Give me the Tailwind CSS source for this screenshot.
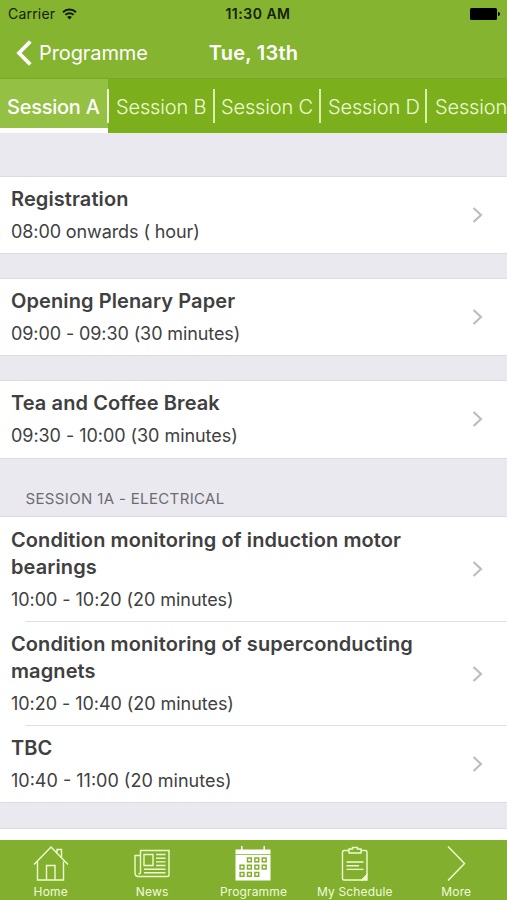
<!DOCTYPE html>
<html lang="en">
<head>
    <meta charset="UTF-8">
    <meta name="viewport" content="width=device-width, initial-scale=1.0">
    <title>Programme - Tue, 13th</title>
    <script src="https://cdn.jsdelivr.net/npm/@tailwindcss/browser@4"></script>
</head>
<body class="h-[900px] overflow-hidden bg-[#eae9f0] font-['Inter','Liberation_Sans',sans-serif] text-[#404040]">
<div class="flex h-[900px] w-[507px] flex-col overflow-hidden">
    <header class="h-[79px] shrink-0 border-b border-[#7aa82b] bg-[#85b430]">
        <!-- Status bar -->
        <div class="grid h-[27px] grid-cols-3 items-center pl-2 pr-[7px] text-[14px] text-[#152000]">
            <div class="flex items-center gap-[7px]">
                <span class="tracking-[0.2px]">Carrier</span>
                <svg width="15" height="12" viewBox="0 0 15 12" fill="none" stroke="#101800" stroke-width="2">
                    <path d="M1 4.2a9.3 9.3 0 0 1 13 0M3.4 6.9a5.9 5.9 0 0 1 8.2 0"/>
                    <path d="M7.5 11.6L5.1 9.1a3.5 3.5 0 0 1 4.8 0z" fill="#101800" stroke="none"/>
                </svg>
            </div>
            <span class="-mr-2 text-center font-semibold tracking-[0.5px]">11:30 AM</span>
            <svg class="justify-self-end" width="30" height="12" viewBox="0 0 30 12">
                <rect width="27" height="12" rx="1.5"/>
                <path d="M28 4a2 2 0 0 1 0 4z"/>
            </svg>
        </div>
        <!-- Navigation bar -->
        <div class="grid h-[51px] grid-cols-3 items-center text-white">
            <a href="#" class="flex items-center gap-[7px] pl-4">
                <svg width="16" height="26" viewBox="0 0 16 26" fill="none" stroke="white" stroke-width="3.8">
                    <path d="M14.3 1.5L3 13l11.3 11.5"/>
                </svg>
                <span class="text-[20px] tracking-[-0.1px]">Programme</span>
            </a>
            <h1 class="text-center text-[20px] font-semibold tracking-[0.25px]">Tue, 13th</h1>
        </div>
    </header>

    <nav class="flex h-[54px] shrink-0 overflow-hidden bg-[#7bb01c] text-[20px] font-light tracking-[-0.15px] text-[#eefbd5]">
        <a href="#" class="relative flex w-[107.5px] shrink-0 items-center border-b-[5px] border-white bg-[#94c043] pl-[7px] pt-[6px] font-medium tracking-[-0.25px] whitespace-nowrap text-white">Session A<span class="absolute -right-px top-[10px] h-[34px] w-[2px] bg-[#eff7dd]"></span></a>
        <a href="#" class="relative flex w-[106px] shrink-0 items-center pl-[8.5px] pt-px whitespace-nowrap">Session B<span class="absolute -right-px top-[10px] h-[34px] w-[2px] bg-[#d9f0ac]"></span></a>
        <a href="#" class="relative flex w-[106.5px] shrink-0 items-center pl-[7.5px] pt-px whitespace-nowrap">Session C<span class="absolute -right-px top-[10px] h-[34px] w-[2px] bg-[#d9f0ac]"></span></a>
        <a href="#" class="relative flex w-[106px] shrink-0 items-center pl-2 pt-px whitespace-nowrap">Session D<span class="absolute -right-px top-[10px] h-[34px] w-[2px] bg-[#d9f0ac]"></span></a>
        <a href="#" class="flex w-[107px] shrink-0 items-center pl-[9px] pt-px whitespace-nowrap">Session E</a>
    </nav>

    <main class="min-h-0 flex-1 overflow-hidden pt-[42.7px]">
        <a href="#" class="mb-6 flex h-[78.3px] items-center justify-between border-y border-[#dcdbe0] bg-white pl-[11px] pr-6">
            <div>
                <h2 class="text-[20px] leading-[27px] font-semibold tracking-[0.1px]">Registration</h2>
                <p class="mt-[6px] text-[18px] leading-[25px] tracking-[-0.1px]">08:00 onwards ( hour)</p>
            </div>
            <svg width="11" height="18" viewBox="0 0 11 18" fill="none" stroke="#bdbdbf" stroke-width="2.2"><path d="M1.5 2L9 9l-7.500 7"/></svg>
        </a>
        <a href="#" class="mb-6 flex h-[78.3px] items-center justify-between border-y border-[#dcdbe0] bg-white pl-[11px] pr-6">
            <div>
                <h2 class="text-[20px] leading-[27px] font-semibold tracking-[0.1px]">Opening Plenary Paper</h2>
                <p class="mt-[6px] text-[18px] leading-[25px] tracking-[-0.1px]">09:00 - 09:30 (30 minutes)</p>
            </div>
            <svg width="11" height="18" viewBox="0 0 11 18" fill="none" stroke="#bdbdbf" stroke-width="2.2"><path d="M1.5 2L9 9l-7.500 7"/></svg>
        </a>
        <a href="#" class="flex h-[78.3px] items-center justify-between border-y border-[#dcdbe0] bg-white pl-[11px] pr-6">
            <div>
                <h2 class="text-[20px] leading-[27px] font-semibold tracking-[0.1px]">Tea and Coffee Break</h2>
                <p class="mt-[6px] text-[18px] leading-[25px] tracking-[-0.05px]">09:30 - 10:00 (30 minutes)</p>
            </div>
            <svg width="11" height="18" viewBox="0 0 11 18" fill="none" stroke="#bdbdbf" stroke-width="2.2"><path d="M1.5 2L9 9l-7.500 7"/></svg>
        </a>

        <h3 class="flex h-[57.5px] items-end pb-[7px] pl-[25.5px] text-[15px] leading-5 tracking-[0.35px] text-[#6d6c72]">SESSION 1A - ELECTRICAL</h3>
        <section class="h-[287px] border-y border-[#dcdbe0] bg-white">
            <a href="#" class="flex h-[104px] items-center justify-between pl-[11px] pr-6">
                <div>
                    <h2 class="text-[20px] leading-[27px] font-semibold tracking-[0.1px]">Condition monitoring of induction motor<br>bearings</h2>
                    <p class="mt-[6px] text-[18px] leading-[25px] tracking-[-0.05px]">10:00 - 10:20 (20 minutes)</p>
                </div>
                <svg width="11" height="18" viewBox="0 0 11 18" fill="none" stroke="#bdbdbf" stroke-width="2.2"><path d="M1.5 2L9 9l-7.500 7"/></svg>
            </a>
            <div class="ml-[25px] h-px bg-[#dfdfe2]"></div>
            <a href="#" class="flex h-[103px] items-center justify-between pl-[11px] pr-6">
                <div>
                    <h2 class="text-[20px] leading-[27px] font-semibold tracking-[0.1px]">Condition monitoring of superconducting<br>magnets</h2>
                    <p class="mt-[6px] text-[18px] leading-[25px] tracking-[-0.05px]">10:20 - 10:40 (20 minutes)</p>
                </div>
                <svg width="11" height="18" viewBox="0 0 11 18" fill="none" stroke="#bdbdbf" stroke-width="2.2"><path d="M1.5 2L9 9l-7.500 7"/></svg>
            </a>
            <div class="ml-[25px] h-px bg-[#dfdfe2]"></div>
            <a href="#" class="flex h-[76px] items-center justify-between pl-[11px] pr-6">
                <div>
                    <h2 class="text-[20px] leading-[27px] font-semibold">TBC</h2>
                    <p class="mt-[6px] text-[18px] leading-[25px]">10:40 - 11:00 (20 minutes)</p>
                </div>
                <svg width="11" height="18" viewBox="0 0 11 18" fill="none" stroke="#bdbdbf" stroke-width="2.2"><path d="M1.5 2L9 9l-7.500 7"/></svg>
            </a>
        </section>
        <div class="mt-[25px] h-[60px] border-t border-[#dcdbe0] bg-white"></div>
    </main>

    <!-- Tab bar -->
    <footer class="grid h-[60px] shrink-0 grid-cols-5 bg-[#82b02e] text-[12px] leading-4 tracking-[0.15px] text-[#f1fbdc]">
        <a href="#" class="flex flex-col items-center gap-[3px] pt-[5px]">
            <svg width="36" height="36" viewBox="0 0 36 36" fill="none" stroke="#eefbd0" stroke-width="1.4">
                <path d="M1 19.500L18 2l17 17.500M4.500 16.500V35h26V16.500M13.500 35V20.500h8.500V35M24 8V4.500h4.500V13"/>
            </svg>
            <span>Home</span>
        </a>
        <a href="#" class="flex flex-col items-center gap-[3px] pt-[5px]">
            <svg width="36" height="36" viewBox="0 0 36 36" fill="none" stroke="#eefbd0" stroke-width="1.4">
                <path d="M6.500 27V5.500h28.500v24.500q0 1.500-1.500 1.500h-29q-3.500 0-3.500-3.500V10.500h5.500M6.500 27q0 2-2 2"/>
                <path d="M10 9.500h9v11h-9zM22 9.500h9.500M22 13.200h9.500M22 16.900h9.500M22 20.500h9.500M10 24.200h21.500M10 27.800h21.500"/>
            </svg>
            <span>News</span>
        </a>
        <a href="#" class="flex flex-col items-center gap-[3px] pt-[5px]">
            <svg width="36" height="36" viewBox="0 0 36 36" fill="none" stroke="#82b02e" stroke-width="1.5">
                <path d="M.5 4.500h35V9H.5zM.5 9.700h35v25.800H.5zM6 1h1.500v4H6zM28.500 1H30v4h-1.500z" fill="white" stroke="none"/>
                <path d="M12.500 12.900h3.800v3.800h-3.800zM19.900 12.900h3.800v3.800h-3.800zM27.300 12.900h3.800v3.800h-3.800zM5.100 20.200h3.800v3.800H5.100zM12.500 20.200h3.800v3.800h-3.800zM19.900 20.200h3.800v3.800h-3.800zM27.300 20.200h3.800v3.800h-3.800zM5.100 27.500h3.800v3.800H5.100zM12.500 27.500h3.800v3.800h-3.800zM19.900 27.500h3.800v3.800h-3.800z"/>
            </svg>
            <span>Programme</span>
        </a>
        <a href="#" class="flex flex-col items-center gap-[3px] pt-[5px]">
            <svg width="36" height="36" viewBox="0 0 36 36" fill="none" stroke="#eefbd0" stroke-width="1.4">
                <path d="M12 5.500H7q-1.500 0-1.500 1.500v26.500q0 1.500 1.500 1.500h18l5-5V7q0-1.500-1.500-1.500H24M12 4h3.500V2.500h5V4H24v4H12zM9.500 17h17M9.500 20.700h12.500M9.500 24.400h17"/>
                <path d="M25 35l5-5V35z" fill="#eefbd0"/>
            </svg>
            <span>My Schedule</span>
        </a>
        <a href="#" class="flex flex-col items-center gap-[3px] pt-[5px]">
            <svg width="36" height="36" viewBox="0 0 36 36" fill="none" stroke="#eefbd0" stroke-width="1.5">
                <path d="M10 1.500l16.500 17L10 35.500"/>
            </svg>
            <span>More</span>
        </a>
    </footer>
</div>
</body>
</html>
